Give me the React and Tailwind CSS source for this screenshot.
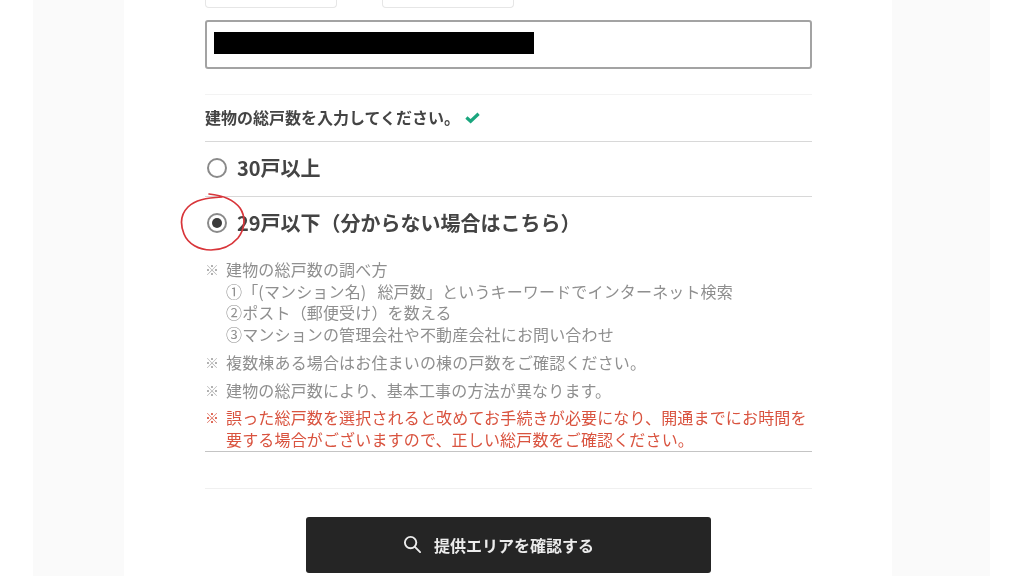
import React from "react";

const font = { fontFamily: '"Noto Sans CJK JP", "Noto Sans", sans-serif' };

function Radio({ checked }) {
  return (
    <span className="flex h-[20px] w-[20px] shrink-0 items-center justify-center rounded-full border-2 border-[#8a8a8a] bg-white">
      {checked && <span className="h-[10px] w-[10px] rounded-full bg-[#3a3a3a]" />}
    </span>
  );
}

function Note({ children, red, className = "" }) {
  return (
    <div className={`flex ${red ? "text-[#d9533f]" : "text-[#8f8f8f]"} ${className}`}>
      <span className={`w-[21px] shrink-0 text-[14px] ${red ? "text-[#d9533f]" : "text-[#a5a5a5]"}`}>※</span>
      <div className="min-w-0 flex-1">{children}</div>
    </div>
  );
}

export default function App() {
  return (
    <div style={font} className="h-[576px] w-[1024px] overflow-hidden bg-white pl-[33px] pr-[34px] blur-[0.4px]">
      <div className="relative h-full bg-[#fafafa] pl-[91px] pr-[98px]">
        <div className="h-full bg-white pl-[81px] pr-[80px]">
          <div className="flex gap-[45px]">
            <div className="h-[8px] w-[132px] rounded-b-[4px] border border-t-0 border-[#e6e6e6]" />
            <div className="h-[8px] w-[132px] rounded-b-[4px] border border-t-0 border-[#e6e6e6]" />
          </div>

          <div className="mt-[12px] flex h-[49px] items-center rounded-[3px] border-2 border-[#a3a3a3] pb-[3px] pl-[7px]">
            <div className="h-[22px] w-[320px] bg-black" />
          </div>

          <div className="mt-[25px] flex h-[48px] items-center border-y border-b-[#d8d8d8] border-t-[#f3f3f3] pb-[2px]">
            <span className="text-[16px] font-bold leading-none text-[#444444]">建物の総戸数を入力してください。</span>
            <svg viewBox="0 0 16 16" className="ml-[5px] h-[15px] w-[15px] text-[#1aa67e]" fill="none" stroke="currentColor" strokeWidth="3.4">
              <path d="M1.5 8 L6 12 L14.5 4" />
            </svg>
          </div>

          <div className="flex h-[55px] items-center gap-[10px] border-b border-[#d8d8d8] pb-[2px] pl-[2px]">
            <Radio />
            <span className="text-[20px] font-bold leading-none text-[#444444]">30戸以上</span>
          </div>

          <div className="flex h-[53px] items-center gap-[10px] pb-[1px] pl-[2px]">
            <Radio checked />
            <span className="text-[20px] font-bold leading-none text-[#444444]">29戸以下（分からない場合はこちら）</span>
          </div>

          <div className="border-b border-[#c4c4c4] pt-[9px] text-[16px] leading-[21.7px] tracking-[0.16px]">
            <Note>
              <div>建物の総戸数の調べ方</div>
              <div>
                ①「(マンション名)<span className="inline-block w-[11px]" />総戸数」というキーワードでインターネット検索
              </div>
              <div>②ポスト（郵便受け）を数える</div>
              <div>③マンションの管理会社や不動産会社にお問い合わせ</div>
            </Note>
            <Note className="mt-[6px]">複数棟ある場合はお住まいの棟の戸数をご確認ください。</Note>
            <Note className="mt-[6px]">建物の総戸数により、基本工事の方法が異なります。</Note>
            <Note red className="mt-[6px]">
              誤った総戸数を選択されると改めてお手続きが必要になり、開通までにお時間を要する場合がございますので、正しい総戸数をご確認ください。
            </Note>
          </div>

          <div className="mt-[36px] border-t border-[#f0f0f0] pt-[28px]">
            <button className="mx-auto flex h-[56px] w-[405px] items-center justify-center gap-[12px] rounded-[3px] bg-[#252525] pr-[20px] text-[16px] font-bold text-[#ececec]">
              <svg viewBox="0 0 20 20" className="h-[19px] w-[19px]" fill="none" stroke="currentColor" strokeWidth="2" strokeLinecap="round">
                <circle cx="8" cy="8" r="6" />
                <path d="M12.5 12.5 L18 18" />
              </svg>
              提供エリアを確認する
            </button>
          </div>
        </div>

        <svg viewBox="178 190 70 64" className="absolute left-[145px] top-[190px] h-[64px] w-[70px]" fill="none" stroke="#d8353a" strokeWidth="1.7" strokeLinecap="round" strokeLinejoin="round">
          <path d="M209 194 C220 195 233 199 240 208 C246 217 245 229 238 238 C231 246 221 250 211 250 C199 250 188 244 184 234 C180 224 181 214 188 207 C195 200 206 198 222 197" />
        </svg>
      </div>
    </div>
  );
}
